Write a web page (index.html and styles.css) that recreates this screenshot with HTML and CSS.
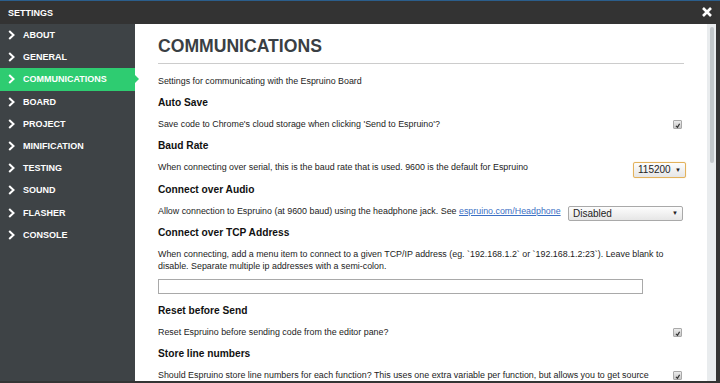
FILE: index.html
```html
<!DOCTYPE html>
<html lang="en">
  <head>
    <meta charset="UTF-8" />
    <meta name="viewport" content="width=device-width, initial-scale=1.0" />
    <title>Settings</title>
    <link rel="stylesheet" href="styles.css">
  </head>
  <body>
    <div class="window">
      <div class="titlebar">
        <span class="title">SETTINGS</span>
        <span class="close">
          <svg width="10" height="10" viewBox="0 0 10 10">
            <path d="M1 1 L9 9 M9 1 L1 9" stroke="#fff" stroke-width="2.6" fill="none" />
          </svg>
        </span>
      </div>

      <div class="main">
        <div class="sidebar">
          <div class="nav-item"><svg class="chev" width="7" height="10" viewBox="0 0 7 10"><polyline points="1.2,1 5.5,5 1.2,9" /></svg>ABOUT</div>
          <div class="nav-item"><svg class="chev" width="7" height="10" viewBox="0 0 7 10"><polyline points="1.2,1 5.5,5 1.2,9" /></svg>GENERAL</div>
          <div class="nav-item active"><svg class="chev" width="7" height="10" viewBox="0 0 7 10"><polyline points="1.2,1 5.5,5 1.2,9" /></svg>COMMUNICATIONS</div>
          <div class="nav-item"><svg class="chev" width="7" height="10" viewBox="0 0 7 10"><polyline points="1.2,1 5.5,5 1.2,9" /></svg>BOARD</div>
          <div class="nav-item"><svg class="chev" width="7" height="10" viewBox="0 0 7 10"><polyline points="1.2,1 5.5,5 1.2,9" /></svg>PROJECT</div>
          <div class="nav-item"><svg class="chev" width="7" height="10" viewBox="0 0 7 10"><polyline points="1.2,1 5.5,5 1.2,9" /></svg>MINIFICATION</div>
          <div class="nav-item"><svg class="chev" width="7" height="10" viewBox="0 0 7 10"><polyline points="1.2,1 5.5,5 1.2,9" /></svg>TESTING</div>
          <div class="nav-item"><svg class="chev" width="7" height="10" viewBox="0 0 7 10"><polyline points="1.2,1 5.5,5 1.2,9" /></svg>SOUND</div>
          <div class="nav-item"><svg class="chev" width="7" height="10" viewBox="0 0 7 10"><polyline points="1.2,1 5.5,5 1.2,9" /></svg>FLASHER</div>
          <div class="nav-item"><svg class="chev" width="7" height="10" viewBox="0 0 7 10"><polyline points="1.2,1 5.5,5 1.2,9" /></svg>CONSOLE</div>
        </div>

        <div class="content">
          <h1>COMMUNICATIONS</h1>
          <hr />
          <p class="desc intro">Settings for communicating with the Espruino Board</p>

          <div class="setting">
            <h3>Auto Save</h3>
            <div class="row">
              <p class="desc">Save code to Chrome's cloud storage when clicking 'Send to Espruino'?</p>
              <span class="check"><svg width="9" height="9" viewBox="0 0 9 9"><path d="M2.5 5 L4.5 6.8 L7.2 2.2" /></svg></span>
            </div>
          </div>

          <div class="setting">
            <h3>Baud Rate</h3>
            <div class="row">
              <p class="desc">When connecting over serial, this is the baud rate that is used. 9600 is the default for Espruino</p>
              <span class="select baud">115200 <span class="caret">&#9660;</span></span>
            </div>
          </div>

          <div class="setting">
            <h3>Connect over Audio</h3>
            <div class="row">
              <p class="desc">Allow connection to Espruino (at 9600 baud) using the headphone jack. See <a class="link" href="#">espruino.com/Headphone</a></p>
              <span class="select audio">Disabled <span class="caret">&#9660;</span></span>
            </div>
          </div>

          <div class="setting">
            <h3>Connect over TCP Address</h3>
            <div class="row">
              <p class="desc">When connecting, add a menu item to connect to a given TCP/IP address (eg. `192.168.1.2` or `192.168.1.2:23`). Leave blank to disable. Separate multiple ip addresses with a semi-colon.</p>
            </div>
            <div class="text-input"></div>
          </div>

          <div class="setting">
            <h3>Reset before Send</h3>
            <div class="row">
              <p class="desc">Reset Espruino before sending code from the editor pane?</p>
              <span class="check"><svg width="9" height="9" viewBox="0 0 9 9"><path d="M2.5 5 L4.5 6.8 L7.2 2.2" /></svg></span>
            </div>
          </div>

          <div class="setting">
            <h3>Store line numbers</h3>
            <div class="row">
              <p class="desc">Should Espruino store line numbers for each function? This uses one extra variable per function, but allows you to get source code debugging in the Web IDE</p>
              <span class="check"><svg width="9" height="9" viewBox="0 0 9 9"><path d="M2.5 5 L4.5 6.8 L7.2 2.2" /></svg></span>
            </div>
          </div>
        </div>

        <div class="scrollbar">
          <div class="thumb"></div>
        </div>
      </div>
    </div>
  </body>
</html>
```

FILE: styles.css
```css
* {
  margin: 0;
  padding: 0;
  box-sizing: border-box;
}

body {
  height: 383px;
  overflow: hidden;
  background: linear-gradient(#2b5e8c 0 1px, #343434 1px);
  font-family: "Liberation Sans", Arial, sans-serif;
}

.window {
  width: 716px;
  height: 380px;
  margin-top: 1px;
  display: flex;
  flex-direction: column;
}

/* Title bar */

.titlebar {
  height: 23px;
  background-color: #333;
  color: white;
  font-size: 9px;
  font-weight: bold;
  display: flex;
  align-items: center;
  justify-content: space-between;
  padding: 0 4px 0 8px;
}

.close {
  display: flex;
  margin-top: -1px;
}

.main {
  flex: 1;
  display: flex;
  min-height: 0;
}

/* Sidebar */

.sidebar {
  width: 135px;
  background-color: #3e4346;
  position: relative;
  z-index: 1;
}

.nav-item {
  height: 22.2px;
  display: flex;
  align-items: center;
  padding-left: 8px;
  color: white;
  font-size: 9px;
  font-weight: bold;
  position: relative;
}

.chev {
  margin-right: 8px;
}

.chev polyline {
  fill: none;
  stroke: white;
  stroke-width: 2;
}

.nav-item.active {
  background-color: #2ecc71;
}

.nav-item.active::after {
  content: "";
  position: absolute;
  right: -4px;
  top: 50%;
  margin-top: -4px;
  border-left: 4px solid #2ecc71;
  border-top: 4px solid transparent;
  border-bottom: 4px solid transparent;
}

/* Content */

.content {
  flex: 1;
  background-color: white;
  padding: 11px 23px 0 23px;
  overflow: hidden;
  color: #1c1c1c;
}

.content > h1 {
  font-size: 17.6px;
  line-height: 22px;
  color: #3a3f44;
}

.content > hr {
  border: none;
  border-top: 1px solid #ccc;
  margin-top: 6px;
}

.intro {
  margin-top: 6.6px;
}

.setting > h3 {
  font-size: 10.2px;
  line-height: 22px;
  color: #111;
}

.row {
  display: flex;
  align-items: flex-start;
  gap: 6px;
}

.desc {
  flex: 1;
  font-size: 8.9px;
  line-height: 11.4px;
  padding: 5px 0;
}

.link {
  color: #3b6fc4;
}

.check {
  width: 9px;
  height: 9px;
  margin-top: 6px;
  margin-right: 2px;
  border: 1px solid #a9a9a9;
  border-radius: 1px;
  background: linear-gradient(#ececec, #c8c8c8);
  display: flex;
}

.check path {
  fill: none;
  stroke: #333;
  stroke-width: 1.6;
}

.select {
  display: flex;
  align-items: center;
  justify-content: space-between;
  font-size: 10px;
  color: #222;
  border: 1px solid #a9a9a9;
  border-radius: 2px;
  background: linear-gradient(#fdfdfd, #e6e6e6);
  padding: 0 4px;
}

.caret {
  font-size: 6px;
}

.baud {
  width: 53px;
  height: 16px;
  margin-top: 4.5px;
  margin-right: -2px;
  border-color: #e3b25c;
  box-shadow: 0 0 1px #f0c67a;
}

.audio {
  width: 115px;
  height: 15px;
  margin-top: 5px;
  margin-right: 1px;
}

.text-input {
  width: 485px;
  height: 15px;
  margin: 2px 0 6px 0;
  border: 1px solid #a9a9a9;
}

/* Scrollbar */

.scrollbar {
  width: 9px;
  background-color: #e9ecee;
  padding: 3px 2px 0 3px;
}

.thumb {
  height: 136px;
  background-color: #c3c8cb;
  border-radius: 2px;
}
```
